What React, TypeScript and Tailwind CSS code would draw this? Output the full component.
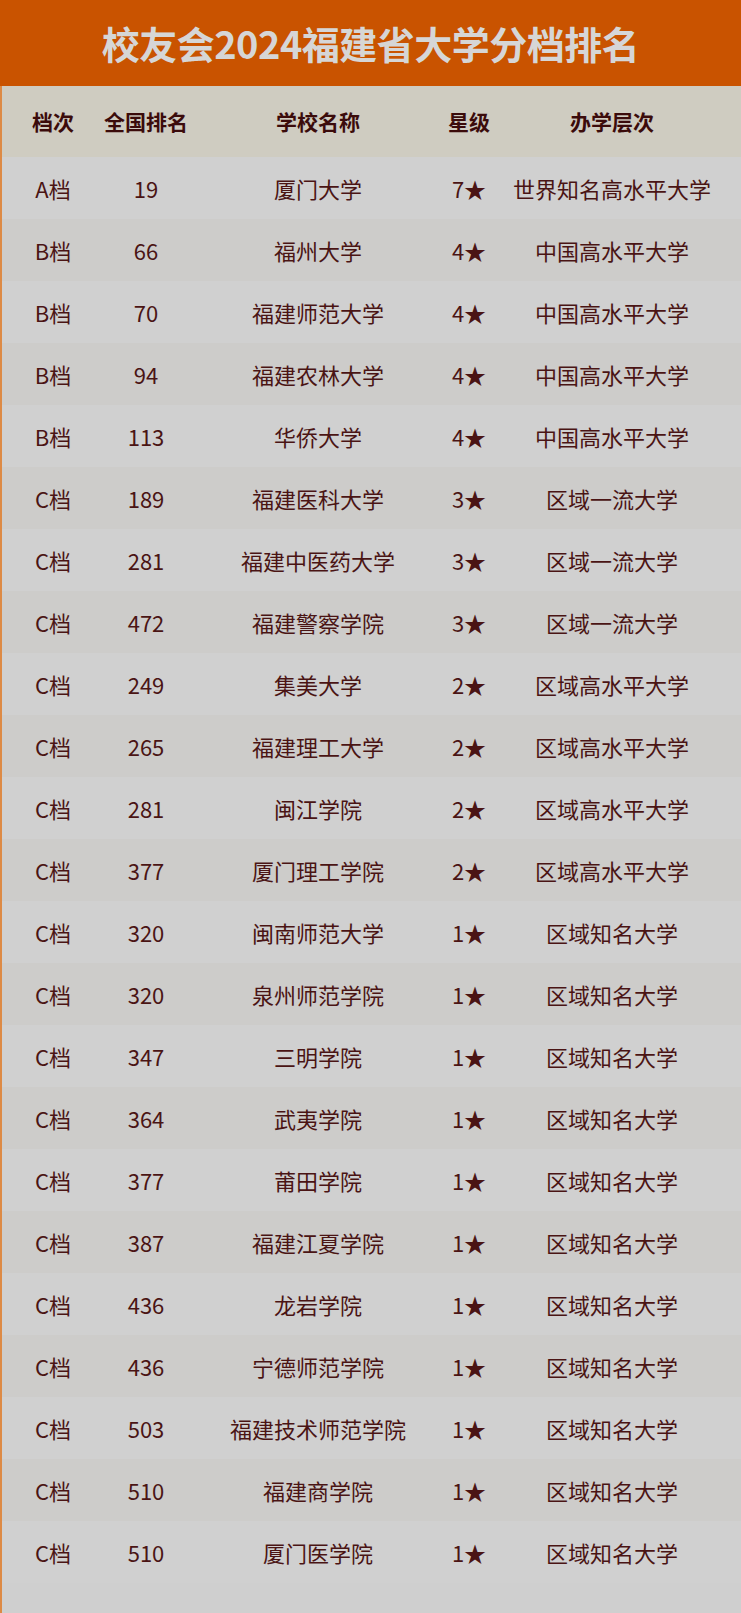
const rows: [string, string, string, string, string][] = [
  ["A档", "19", "厦门大学", "7★", "世界知名高水平大学"],
  ["B档", "66", "福州大学", "4★", "中国高水平大学"],
  ["B档", "70", "福建师范大学", "4★", "中国高水平大学"],
  ["B档", "94", "福建农林大学", "4★", "中国高水平大学"],
  ["B档", "113", "华侨大学", "4★", "中国高水平大学"],
  ["C档", "189", "福建医科大学", "3★", "区域一流大学"],
  ["C档", "281", "福建中医药大学", "3★", "区域一流大学"],
  ["C档", "472", "福建警察学院", "3★", "区域一流大学"],
  ["C档", "249", "集美大学", "2★", "区域高水平大学"],
  ["C档", "265", "福建理工大学", "2★", "区域高水平大学"],
  ["C档", "281", "闽江学院", "2★", "区域高水平大学"],
  ["C档", "377", "厦门理工学院", "2★", "区域高水平大学"],
  ["C档", "320", "闽南师范大学", "1★", "区域知名大学"],
  ["C档", "320", "泉州师范学院", "1★", "区域知名大学"],
  ["C档", "347", "三明学院", "1★", "区域知名大学"],
  ["C档", "364", "武夷学院", "1★", "区域知名大学"],
  ["C档", "377", "莆田学院", "1★", "区域知名大学"],
  ["C档", "387", "福建江夏学院", "1★", "区域知名大学"],
  ["C档", "436", "龙岩学院", "1★", "区域知名大学"],
  ["C档", "436", "宁德师范学院", "1★", "区域知名大学"],
  ["C档", "503", "福建技术师范学院", "1★", "区域知名大学"],
  ["C档", "510", "福建商学院", "1★", "区域知名大学"],
  ["C档", "510", "厦门医学院", "1★", "区域知名大学"],
];

const cols = "grid grid-cols-[102px_84px_260px_42px_244px_1fr]";

const App = () => {
  return (
    <div
      className="w-[741px] min-h-[1613px] bg-[#cfcfcf] overflow-hidden"
      style={{ fontFamily: '"Noto Sans CJK SC", "Noto Sans", sans-serif' }}
    >
      <div className="h-[86px] bg-[#c95300] flex items-center justify-center">
        <h1 className="text-[38px] font-bold text-[#d6d6d6] tracking-[-0.5px] leading-none">
          校友会2024福建省大学分档排名
        </h1>
      </div>
      <div className="border-l-2 border-[#dd8a45] min-h-[1527px]">
        <div
          className={`${cols} h-[71px] items-center bg-[#cfccc1] text-[21px] font-bold text-[#3b0b0b] text-center`}
        >
          <div>档次</div>
          <div className="whitespace-nowrap">全国排名</div>
          <div>学校名称</div>
          <div>星级</div>
          <div>办学层次</div>
          <div />
        </div>
        {rows.map((row, key) => (
          <div
            key={key}
            className={`${cols} h-[62px] items-center text-[22px] text-[#4a1414] text-center ${
              key % 2 === 1 ? "bg-[#cdccca]" : "bg-[#d0d0d0]"
            }`}
          >
            {row.map((cell, i) => (
              <div key={i} className="whitespace-nowrap leading-none">
                {cell}
              </div>
            ))}
            <div />
          </div>
        ))}
      </div>
    </div>
  );
};

export default App;
